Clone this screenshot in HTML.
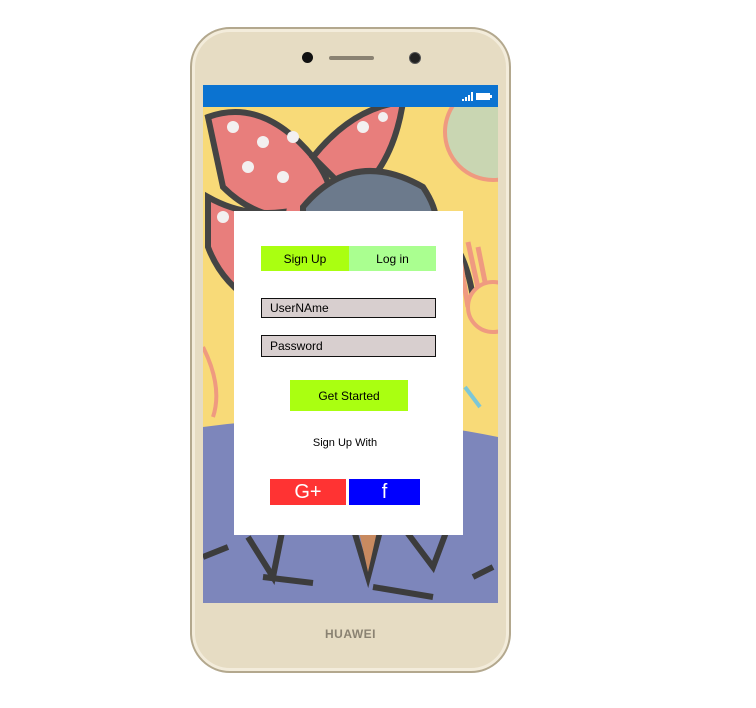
<!DOCTYPE html>
<html><head><meta charset="utf-8"><style>
*{margin:0;padding:0;box-sizing:border-box}
body{width:756px;height:708px;background:#fff;position:relative;overflow:hidden;font-family:"Liberation Sans",sans-serif}
.a{position:absolute}
.phone{left:190px;top:27px;width:321px;height:646px;border-radius:40px;background:#e6dcc3;border:2px solid #b3a88e;box-shadow:inset 0 0 0 3px #f3ecdb}
.lbl{font-size:12px;color:#000;display:flex;align-items:center;justify-content:center}
.field{border:1.5px solid #111;background:#d8cfcf;font-size:12px;padding-left:8px;display:flex;align-items:center}
</style></head><body>
<div class="a phone"></div>
<div class="a" style="left:302px;top:52px;width:11px;height:11px;border-radius:50%;background:#111"></div>
<div class="a" style="left:409px;top:52px;width:12px;height:12px;border-radius:50%;background:#222;border:1px solid #555"></div>
<div class="a" style="left:329px;top:56px;width:45px;height:4px;border-radius:2px;background:#8a8272"></div>
<div class="a" style="left:203px;top:85px;width:295px;height:518px;overflow:hidden;background:#f8da78">
  <div class="a" style="left:0;top:0;width:295px;height:22px;background:#0b73d1"></div>
  <svg class="a" style="left:258px;top:6px" width="32" height="11"><path d="M1 10h2v-2h-2zM4 10h2v-4h-2zM7 10h2v-6h-2zM10 10h2v-9h-2z" fill="#fff"/><rect x="15" y="2" width="14" height="7" fill="#fff"/><rect x="29" y="4" width="2" height="3" fill="#fff"/></svg>
  <svg class="a" style="left:0;top:22px" width="295" height="496">
    <circle cx="290" cy="25" r="48" fill="#c9d6b2" stroke="#ef9a80" stroke-width="4"/>
    <path d="M0 320 Q150 300 295 330 L295 496 L0 496Z" fill="#7d86bb"/>
    <path d="M5 10 Q60 -10 110 50 Q140 90 120 110 Q60 120 20 80Z" fill="#e87e7c" stroke="#444" stroke-width="6"/>
    <path d="M110 50 Q150 0 200 -5 Q190 60 150 90Z" fill="#e87e7c" stroke="#444" stroke-width="6"/>
    <path d="M100 100 Q150 40 220 80 Q240 110 230 130 L100 130Z" fill="#6c7a8c" stroke="#444" stroke-width="6"/>
    <path d="M5 90 Q40 110 80 105 L60 200 Q20 180 5 140Z" fill="#e87e7c" stroke="#444" stroke-width="6"/>
    <path d="M230 120 Q260 130 270 190" fill="none" stroke="#444" stroke-width="6"/>
    <g fill="#f3f0f0"><circle cx="30" cy="20" r="6"/><circle cx="60" cy="35" r="6"/><circle cx="90" cy="30" r="6"/><circle cx="45" cy="60" r="6"/><circle cx="80" cy="70" r="6"/><circle cx="160" cy="20" r="6"/><circle cx="180" cy="10" r="5"/><circle cx="20" cy="110" r="6"/><circle cx="40" cy="150" r="6"/></g>
    <path d="M255 140 l10 60 M265 135 l12 55 M275 140 l10 50" stroke="#ef9a80" stroke-width="5"/>
    <circle cx="290" cy="200" r="25" fill="#f8da78" stroke="#ef9a80" stroke-width="4"/>
    <path d="M262 280 l15 20" stroke="#7cc7d8" stroke-width="4"/>
    <path d="M0 240 Q20 280 10 310" stroke="#ef9a80" stroke-width="4" fill="none"/>
    <path d="M45 430 L70 470 L80 420 M150 420 L165 470 L178 420 M200 420 L230 460 L245 420" stroke="#3c3c3c" stroke-width="6" fill="none"/>
    <path d="M155 420 L165 465 L175 420Z" fill="#c88a60"/>
    <path d="M0 450 L25 440 M60 470 L110 476 M170 480 L230 490 M270 470 L290 460" stroke="#3c3c3c" stroke-width="6"/>
  </svg>
</div>
<div class="a" style="left:234px;top:211px;width:229px;height:324px;background:#fff"></div>
<div class="a lbl" style="left:261px;top:246px;width:88px;height:25px;background:#aaff11">Sign Up</div>
<div class="a lbl" style="left:349px;top:246px;width:87px;height:25px;background:#aaff90">Log in</div>
<div class="a field" style="left:261px;top:298px;width:175px;height:20px">UserNAme</div>
<div class="a field" style="left:261px;top:335px;width:175px;height:22px">Password</div>
<div class="a lbl" style="left:290px;top:380px;width:118px;height:31px;background:#aaff11;font-size:12px">Get Started</div>
<div class="a lbl" style="left:290px;top:434px;width:110px;height:18px;font-size:11px">Sign Up With</div>
<div class="a lbl" style="left:270px;top:479px;width:76px;height:26px;background:#ff3333;color:#fff;font-size:20px">G+</div>
<div class="a lbl" style="left:349px;top:479px;width:71px;height:26px;background:#0000ff;color:#fff;font-size:20px">f</div>
<div class="a" style="left:190px;top:627px;width:321px;text-align:center;font-size:12px;font-weight:bold;color:#8a8272;letter-spacing:.5px">HUAWEI</div>
</body></html>
